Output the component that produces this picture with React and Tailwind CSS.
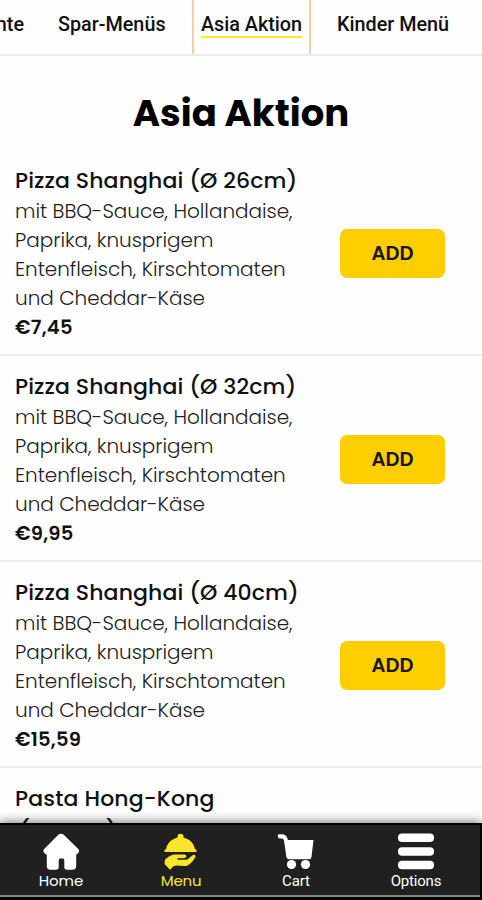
const poppins = "font-['Poppins','Inter',sans-serif]";

const items = [
  { name: 'Pizza Shanghai (Ø 26cm)', price: '€7,45' },
  { name: 'Pizza Shanghai (Ø 32cm)', price: '€9,95' },
  { name: 'Pizza Shanghai (Ø 40cm)', price: '€15,59' },
];

function Item({ name, price }) {
  return (
    <li className="flex h-[206.2px] items-center justify-between border-b-2 border-[#efefef] pl-[15px] pr-[37px]">
      <div className="whitespace-nowrap pt-[3px]">
        <h2 className="h-8 text-[22px] font-medium leading-8 tracking-[0.1px]">{name}</h2>
        <p className="text-[20px] font-light leading-[29px] tracking-[-0.03px] text-[#222]">
          <span className="block">mit BBQ-Sauce, Hollandaise,</span>
          <span className="block">Paprika, knusprigem</span>
          <span className="block">Entenfleisch, Kirschtomaten</span>
          <span className="block">und Cheddar-Käse</span>
        </p>
        <p className="text-[19.5px] font-semibold leading-[29px] tracking-[0.2px]">{price}</p>
      </div>
      <button className="mt-[3px] h-[49px] w-[105px] rounded-[7px] bg-[#ffce00] text-[19.5px] font-semibold text-[#171717]">ADD</button>
    </li>
  );
}

function HomeIcon() {
  return (
    <svg width="38" height="38" viewBox="0 0 38 38" fill="currentColor">
      <path d="M16.3 1.800Q19 -.3 21.700 1.800L36.300 16Q38 18.300 36 20.300L34.200 21.800V33Q34.200 36.800 30.700 36.800H25Q22.300 36.800 22.300 34V27.500Q22.300 25.500 20.800 25.500H18.200Q16.700 25.500 16.700 27.500V34Q16.700 36.800 14 36.800H8.300Q4.800 36.800 4.800 33V21.800L2.500 20.300Q.5 18.300 2.200 16Z" />
    </svg>
  );
}

function MenuIcon() {
  return (
    <svg width="38" height="38" viewBox="0 0 38 38" fill="currentColor">
      <path d="M4 16.500C4.800 10.500 9.500 6 15.500 4.500V3.500Q15.500 .8 18.500 .8T21.500 3.500V4.500C27.500 6 32.200 10.500 33 16.500H34.500V19H2.500V16.500Z" />
      <path d="M3 26.500C7 23.500 9 21.500 14 21.500H22.200Q24.500 21.700 24.300 23.500Q24 25.200 21.500 25.200H15.500V26.700H23.500Q25.500 26.700 27 25.200L30.500 22.200Q33.500 20.800 33.500 23.500C33 25.500 28.500 31.500 25 32.700C20 33.800 15 31.500 11.500 33.300L8 36.800L2.500 31Z" />
    </svg>
  );
}

function CartIcon() {
  return (
    <svg width="38" height="38" viewBox="0 0 38 38" fill="currentColor">
      <path d="M1.500 1.200H5.500Q9.500 1.500 10.500 5.800L11 7H36.500L34.500 24Q34.300 26.300 32 26.300H12Q9.800 26.300 9.400 24L7 7.500Q6.500 5.700 5 5.500H3Q1 5.500.8 3.300Q.7 1.500 1.500 1.200Z" />
      <circle cx="14.500" cy="31.500" r="4.600" />
      <circle cx="28.500" cy="31.500" r="4.600" />
    </svg>
  );
}

function OptionsIcon() {
  return (
    <svg width="38" height="38" viewBox="0 0 38 38" fill="currentColor">
      <rect x="1" y="0.500" width="36" height="8.500" rx="4" />
      <rect x="1" y="14.200" width="36" height="8.500" rx="4" />
      <rect x="1" y="27.800" width="36" height="8.500" rx="4" />
    </svg>
  );
}

export default function App() {
  return (
    <div className={`relative flex h-[900px] w-[482px] flex-col overflow-hidden bg-[#fefefe] text-[#111] ${poppins}`}>
      <nav className="flex h-[56px] shrink-0 items-start whitespace-nowrap border-b-2 border-[#ececec] font-['Roboto',sans-serif] text-[19.8px] font-medium leading-[22px]">
        <a className="flex w-[24px] justify-end pt-[14px]">nte</a>
        <a className="ml-[34px] w-[134px] pt-[14px]">Spar-Menüs</a>
        <a className="flex h-[54px] w-[119px] justify-center border-x-2 border-[#f3cdae] pt-[14px]">
          <span className="h-[24px] border-b-2 border-[#fbe72b]">Asia Aktion</span>
        </a>
        <a className="ml-[26px] pt-[14px]">Kinder Menü</a>
      </nav>
      <h1 className="h-[93.600px] shrink-0 pt-[32px] text-center text-[37px] font-bold leading-[50px] text-black">Asia Aktion</h1>
      <ul className="shrink-0">
        {items.map((item) => (
          <Item key={item.name} {...item} />
        ))}
        <li className="h-[132px] pl-[15px] pt-[14.500px] text-[22px] font-medium leading-8 tracking-[0.15px]">
          <h2>Pasta Hong-Kong</h2>
          <p className="flex w-[102px] justify-between pl-[4px]"><span>(</span><span>)</span></p>
        </li>
      </ul>
      <footer className="absolute inset-x-0 bottom-0 h-[77px] bg-black pr-[2px] text-white shadow-[0_-2px_9px_rgba(0,0,0,0.45)]">
        <div className="flex h-[72px] border-t-2 border-black bg-[#202020] text-[15px] leading-5">
          <a className="flex w-[122px] shrink-0 flex-col items-center pt-[8px]">
            <HomeIcon />
            <span>Home</span>
          </a>
          <a className="flex w-[118px] shrink-0 flex-col items-center pt-[8px] text-[#fbe52b]">
            <MenuIcon />
            <span className="tracking-[-0.2px]">Menu</span>
          </a>
          <a className="flex w-[112px] shrink-0 flex-col items-center pt-[8px] font-['Roboto',sans-serif]">
            <CartIcon />
            <span className="tracking-[-0.1px]">Cart</span>
          </a>
          <a className="flex w-[128px] shrink-0 flex-col items-center pt-[8px] font-['Roboto',sans-serif]">
            <OptionsIcon />
            <span className="tracking-[-0.2px]">Options</span>
          </a>
        </div>
        <div className="h-[2px] bg-[#858585]" />
      </footer>
    </div>
  );
}
